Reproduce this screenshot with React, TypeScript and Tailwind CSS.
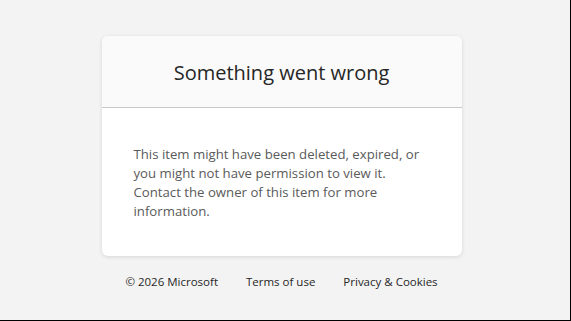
import React from 'react';

const font = { fontFamily: '"Open Sans", "Noto Sans", "Liberation Sans", sans-serif' };

export default function App() {
  return (
    <div
      className="w-[571px] h-[321px] bg-[#f3f3f3] border-r border-b border-black flex flex-col items-center pr-[7px]"
      style={font}
    >
      <div className="mt-[36px] w-[360px] bg-white rounded-[6px] shadow-[0_1px_4px_rgba(0,0,0,0.12)] overflow-hidden">
        <div className="h-[72px] pt-[2px] bg-[#fafafa] border-b border-[#c8c8c8] flex items-center justify-center">
          <h1 className="text-[20px] text-[#262626] font-normal">Something went wrong</h1>
        </div>
        <div className="pt-[37px] pb-[35px] px-[32px]">
          <p className="text-[13.2px] leading-[19px] text-[#5a5a5a]">
            This item might have been deleted, expired, or you might not have permission to view it. Contact the owner of this item for more information.
          </p>
        </div>
      </div>
      <div className="mt-[17px] flex gap-[28px] text-[11.5px] text-[#262626]">
        <span>© 2026 Microsoft</span>
        <a href="#">Terms of use</a>
        <a href="#">Privacy &amp; Cookies</a>
      </div>
    </div>
  );
}
